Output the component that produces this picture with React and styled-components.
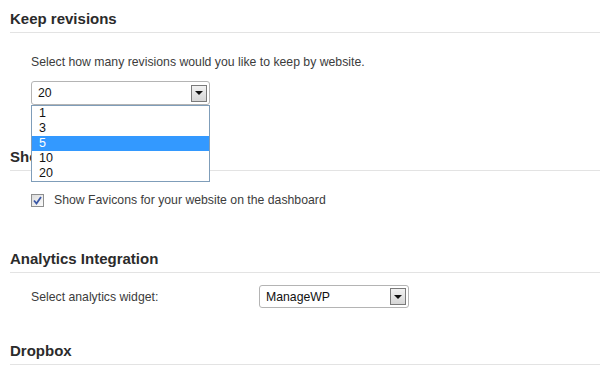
import React from "react";
import styled, { createGlobalStyle } from "styled-components";

const GlobalStyle = createGlobalStyle`
  html, body {
    margin: 0;
    padding: 0;
    background: #ffffff;
  }
  body {
    font-family: "Liberation Sans", Arial, sans-serif;
    color: #333333;
  }
`;

const revisionOptions = ["1", "3", "5", "10", "20"];

const Page = styled.div`
  width: 600px;
  height: 366px;
  overflow: hidden;
  padding-left: 10px;
  box-sizing: border-box;
`;

const Section = styled.section`
  padding-top: ${(p) => p.$top}px;
`;

const Heading = styled.h3`
  margin: 0;
  font-size: 15px;
  font-weight: bold;
  line-height: 18px;
  color: #2b2b2b;
  padding-bottom: 4px;
  border-bottom: 1px solid #e3e3e3;
`;

const Body = styled.div`
  padding-top: ${(p) => p.$top}px;
  padding-left: 21px;
`;

const Text = styled.p`
  margin: 0;
  font-size: 12.25px;
  line-height: 16px;
  color: #3c3c3c;
`;

const SelectWrap = styled.div`
  position: relative;
  margin-top: ${(p) => p.$top || 0}px;
  width: ${(p) => p.$width}px;
`;

const SelectBox = styled.div`
  display: flex;
  align-items: center;
  justify-content: space-between;
  box-sizing: border-box;
  height: ${(p) => p.$height}px;
  border: 1px solid #b4b4b4;
  border-radius: 3px;
  background: #ffffff;
  padding: 0 2px 0 6px;
  font-size: 12.25px;
  color: #111111;
`;

const ArrowButton = styled.span`
  display: flex;
  align-items: center;
  justify-content: center;
  box-sizing: border-box;
  width: 16px;
  height: 17px;
  border: 1px solid #7a7a7a;
  background: linear-gradient(#f2f2f2, #d6d6d6);
`;

const Triangle = styled.span`
  width: 0;
  height: 0;
  border-left: 4px solid transparent;
  border-right: 4px solid transparent;
  border-top: 4px solid #111111;
`;

const OptionList = styled.ul`
  position: absolute;
  top: 100%;
  left: 0;
  right: 0;
  margin: 0;
  padding: 0;
  list-style: none;
  border: 1px solid #7f9db9;
  background: #ffffff;
  z-index: 2;
`;

const Option = styled.li`
  height: 15px;
  line-height: 15px;
  padding-left: 7px;
  font-size: 12.5px;
  color: ${(p) => (p.$active ? "#ffffff" : "#111111")};
  background: ${(p) => (p.$active ? "#3399ff" : "transparent")};
`;

const CheckRow = styled.label`
  display: flex;
  align-items: center;
  gap: 10px;
  height: 16px;
`;

const CheckBox = styled.span`
  display: flex;
  align-items: center;
  justify-content: center;
  box-sizing: border-box;
  width: 13px;
  height: 13px;
  border: 1px solid #8e8f8f;
  background: linear-gradient(135deg, #dcdcdc, #fbfbfb);
`;

const FieldRow = styled.div`
  display: grid;
  grid-template-columns: 228px 150px;
  align-items: center;
`;

const Select = ({ value, width, height, top, children }) => (
  <SelectWrap $width={width} $top={top}>
    <SelectBox $height={height}>
      <span>{value}</span>
      <ArrowButton>
        <Triangle />
      </ArrowButton>
    </SelectBox>
    {children}
  </SelectWrap>
);

export default function App() {
  return (
    <Page>
      <GlobalStyle />
      <Section $top={10}>
        <Heading>Keep revisions</Heading>
        <Body $top={21}>
          <Text>Select how many revisions would you like to keep by website.</Text>
          <Select value="20" width={179} height={24} top={11}>
            <OptionList>
              {revisionOptions.map((o) => (
                <Option key={o} $active={o === "5"}>
                  {o}
                </Option>
              ))}
            </OptionList>
          </Select>
        </Body>
      </Section>

      <Section $top={43}>
        <Heading>Show Favicons</Heading>
        <Body $top={21}>
          <CheckRow>
            <CheckBox>
              <svg width="9" height="9" viewBox="0 0 9 9">
                <path
                  d="M1 4.5 L3.5 7.5 L8 1"
                  fill="none"
                  stroke="#3a57a6"
                  strokeWidth="1.8"
                />
              </svg>
            </CheckBox>
            <Text>Show Favicons for your website on the dashboard</Text>
          </CheckRow>
        </Body>
      </Section>

      <Section $top={42}>
        <Heading>Analytics Integration</Heading>
        <Body $top={12}>
          <FieldRow>
            <Text>Select analytics widget:</Text>
            <Select value="ManageWP" width={150} height={23} />
          </FieldRow>
        </Body>
      </Section>

      <Section $top={34}>
        <Heading>Dropbox</Heading>
      </Section>
    </Page>
  );
}
